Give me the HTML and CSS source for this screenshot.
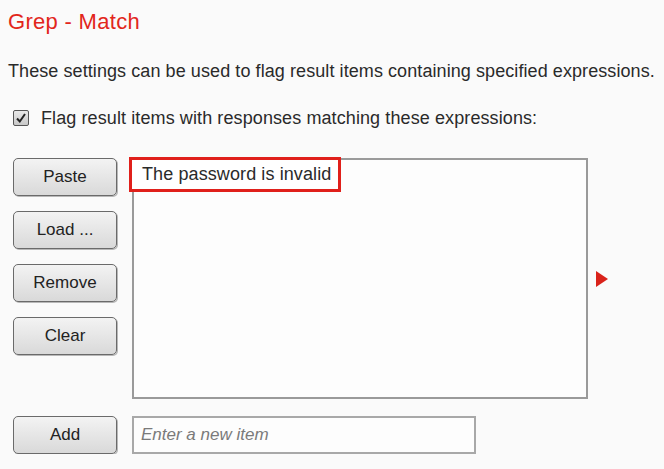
FILE: index.html
```html
<!DOCTYPE html>
<html>
<head>
<meta charset="utf-8">
<link rel="stylesheet" href="styles.css">
</head>
<body>
<div class="page">
  <h1 class="title">Grep - Match</h1>
  <p class="desc">These settings can be used to flag result items containing specified expressions.</p>
  <label class="check-row">
    <span class="checkbox">
      <svg width="12" height="12" viewBox="0 0 12 12"><path d="M2 6.5 L4.8 9.5 L10 2" fill="none" stroke="#222" stroke-width="2"/></svg>
    </span>
    <span class="check-label">Flag result items with responses matching these expressions:</span>
  </label>
  <div class="main-row">
    <div class="buttons">
      <button class="btn">Paste</button>
      <button class="btn">Load ...</button>
      <button class="btn">Remove</button>
      <button class="btn">Clear</button>
    </div>
    <div class="list">
      <div class="item highlighted">The password is invalid</div>
    </div>
    <span class="marker"></span>
  </div>
  <div class="add-row">
    <button class="btn">Add</button>
    <div class="input">Enter a new item</div>
  </div>
</div>
</body>
</html>
```

FILE: styles.css
```css
html, body {
  margin: 0;
  padding: 0;
  background: #fafafa;
}
.page {
  font-family: "Liberation Sans", Arial, sans-serif;
  color: #2a2a2a;
  padding-left: 8px;
}
.title {
  margin: 0;
  padding-top: 9px;
  font-size: 22px;
  line-height: 26px;
  font-weight: normal;
  letter-spacing: 0.3px;
  color: #e2261b;
}
.desc {
  margin: 25px 0 0 0;
  font-size: 18px;
  line-height: 22px;
  letter-spacing: 0.08px;
}
.check-row {
  display: flex;
  align-items: center;
  margin-top: 25px;
  height: 22px;
}
.checkbox {
  box-sizing: border-box;
  width: 16px;
  height: 16px;
  margin-left: 5px;
  border: 1px solid #555;
  border-radius: 2px;
  background: linear-gradient(#e8e8e8, #c8c8c8);
  display: flex;
  align-items: center;
  justify-content: center;
}
.check-label {
  margin-left: 12px;
  font-size: 18px;
  line-height: 22px;
  letter-spacing: 0.1px;
}
.main-row {
  display: flex;
  margin-top: 29px;
  margin-left: 5px;
}
.buttons {
  display: flex;
  flex-direction: column;
  gap: 15px;
}
.btn {
  box-sizing: border-box;
  width: 104px;
  height: 38px;
  border: 1px solid #6a6a6a;
  border-radius: 5px;
  background: linear-gradient(#f3f3f3, #d9d9d9);
  box-shadow: 1px 1px 0 #b8b8b8;
  font-family: "Liberation Sans", Arial, sans-serif;
  font-size: 17px;
  color: #222;
  padding: 0;
}
.list {
  box-sizing: border-box;
  width: 456px;
  height: 241px;
  margin-left: 15px;
  border: 2px solid #9a9a9a;
  background: #fdfdfd;
}
.item {
  font-size: 18px;
  line-height: 29px;
  letter-spacing: 0.1px;
}
.highlighted {
  display: inline-block;
  border: 3px solid #e0201b;
  margin: -3px 0 0 -5px;
  padding: 0 7px 0 10px;
  background: #fff;
}
.marker {
  align-self: center;
  width: 0;
  height: 0;
  margin-left: 8px;
  border-top: 8px solid transparent;
  border-bottom: 8px solid transparent;
  border-left: 12px solid #d9221a;
}
.add-row {
  display: flex;
  margin-top: 17px;
  margin-left: 5px;
}
.input {
  box-sizing: border-box;
  width: 344px;
  height: 38px;
  margin-left: 15px;
  border: 2px solid #a8a8a8;
  background: #fdfdfd;
  font-size: 17px;
  font-style: italic;
  color: #7a7a7a;
  display: flex;
  align-items: center;
  padding-left: 7px;
}
```
